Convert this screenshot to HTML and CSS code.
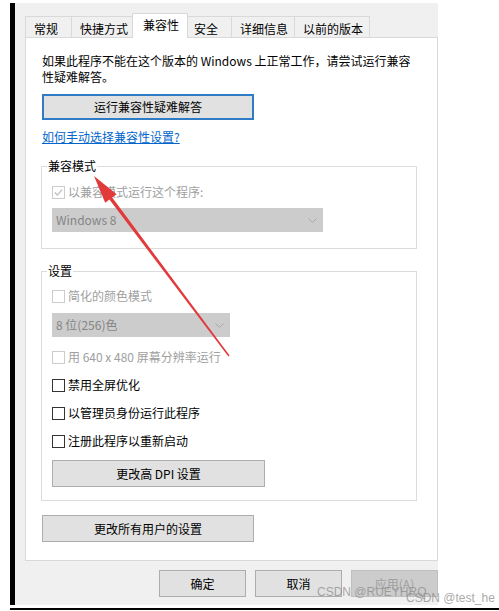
FILE: index.html
```html
<!DOCTYPE html>
<html lang="zh-CN">
<head>
<meta charset="utf-8">
<title>兼容性</title>
<link rel="stylesheet" href="styles.css">
</head>
<body>
<div class="screen">
  <div class="window">
    <div class="tabs">
      <div class="tab">常规</div>
      <div class="tab">快捷方式</div>
      <div class="tab active">兼容性</div>
      <div class="tab">安全</div>
      <div class="tab">详细信息</div>
      <div class="tab">以前的版本</div>
    </div>
    <div class="panel">
      <p class="intro">如果此程序不能在这个版本的 Windows 上正常工作，请尝试运行兼容性疑难解答。</p>
      <button class="btn btn-default btn-wide">运行兼容性疑难解答</button>
      <a class="link">如何手动选择兼容性设置?</a>

      <div class="group g1">
        <div class="legend">兼容模式</div>
        <div class="check disabled first">
          <span class="box"><svg width="11" height="11" viewBox="0 0 11 11"><path d="M1.8 5.6 L4.3 8 L9.2 2.6" fill="none" stroke="#c2c2c2" stroke-width="1.4"/></svg></span>以兼容模式运行这个程序:
        </div>
        <div class="select s1">Windows 8<svg width="9" height="5" viewBox="0 0 9 5"><path d="M0.5 0.5 L4.5 4.5 L8.5 0.5" fill="none" stroke="#aaaaaa"/></svg></div>
      </div>

      <div class="group g2">
        <div class="legend">设置</div>
        <div class="check disabled first"><span class="box"></span>简化的颜色模式</div>
        <div class="select s2">8 位(256)色<svg width="9" height="5" viewBox="0 0 9 5"><path d="M0.5 0.5 L4.5 4.5 L8.5 0.5" fill="none" stroke="#aaaaaa"/></svg></div>
        <div class="check disabled spaced"><span class="box"></span>用 640 x 480 屏幕分辨率运行</div>
        <div class="check spaced"><span class="box"></span>禁用全屏优化</div>
        <div class="check spaced"><span class="box"></span>以管理员身份运行此程序</div>
        <div class="check spaced"><span class="box"></span>注册此程序以重新启动</div>
        <button class="btn btn-dpi">更改高 DPI 设置</button>
      </div>

      <button class="btn btn-wide btn-all">更改所有用户的设置</button>
    </div>
    <div class="footer">
      <button class="btn btn-foot">确定</button>
      <button class="btn btn-foot">取消</button>
      <button class="btn btn-foot btn-disabled">应用(A)</button>
    </div>
  </div>
  <div class="baseline"></div>

  <svg class="arrow" width="499" height="611" viewBox="0 0 499 611">
    <polygon points="94,176 116.6,194.2 112.2,197.4 229.6,355.6 228.4,356.4 109.4,199.6 105.2,202.8" fill="#e2393b"/>
  </svg>
  <div class="watermark w1">CSDN @RUEYHRQ</div>
  <div class="watermark w2">CSDN @test_he</div>
</div>
</body>
</html>
```

FILE: styles.css
```css
html, body {
  margin: 0;
  padding: 0;
  background: #ffffff;
}

body {
  font-family: "Noto Sans CJK SC", "Microsoft YaHei", sans-serif;
  font-size: 12px;
  color: #000000;
}

.screen {
  position: relative;
  width: 499px;
  height: 611px;
  padding-top: 3px;
  box-sizing: border-box;
  overflow: hidden;
}

.window {
  margin-left: 10px;
  width: 428px;
  height: 602px;
  box-sizing: border-box;
  border-left: 5px solid #000000;
  background: #f0f0f0;
  padding: 10px 0 0 10px;
  display: flex;
  flex-direction: column;
}

/* Tabs */
.tabs {
  display: flex;
  align-items: flex-end;
  height: 24px;
  flex: none;
}

.tab {
  box-sizing: border-box;
  height: 21px;
  min-width: 47px;
  padding: 4px 6px 0 8px;
  line-height: 16px;
  border: 1px solid #d9d9d9;
  border-bottom: none;
  background: #f0f0f0;
  margin-left: -1px;
  white-space: nowrap;
}

.tab:first-child {
  margin-left: 0;
}

.tab.active {
  height: 25px;
  margin: 0 -2px -1px -3px;
  padding: 3px 8px 0 10px;
  background: #ffffff;
  position: relative;
  z-index: 1;
}

/* Panel */
.panel {
  box-sizing: border-box;
  height: 524px;
  flex: none;
  background: #ffffff;
  border: 1px solid #d9d9d9;
  padding: 15px 0 0 16px;
  display: flex;
  flex-direction: column;
  align-items: flex-start;
}

.intro {
  margin: 0;
  width: 372px;
  line-height: 16px;
}

.btn {
  font: inherit;
  color: #000000;
  box-sizing: border-box;
  height: 27px;
  background: #e1e1e1;
  border: 1px solid #adadad;
  padding: 0;
  margin: 0;
  display: flex;
  align-items: center;
  justify-content: center;
  line-height: 16px;
}

.btn-wide {
  width: 212px;
  margin-top: 9px;
}

.btn-default {
  height: 26px;
  border: 2px solid #2f7cc6;
}

.link {
  margin-top: 9px;
  line-height: 16px;
  color: #0066cc;
  text-decoration: underline;
}

/* Groups */
.group {
  margin-left: -1px;
  width: 376px;
  box-sizing: border-box;
  border: 1px solid #dcdcdc;
  padding: 0 0 0 10px;
  display: flex;
  flex-direction: column;
  align-items: flex-start;
}

.g1 {
  margin-top: 21px;
  padding-bottom: 16px;
}

.g2 {
  margin-top: 22px;
  padding-bottom: 13px;
}

.legend {
  margin: -9px 0 0 -5px;
  padding: 0 1px;
  background: #ffffff;
  line-height: 16px;
}

.check {
  display: flex;
  align-items: center;
  height: 16px;
  line-height: 16px;
  white-space: nowrap;
}

.g1 .check.first {
  margin-top: 10px;
}

.g2 .check.first {
  margin-top: 9px;
}

.check.spaced {
  margin-top: 12px;
}

.box {
  width: 13px;
  height: 13px;
  box-sizing: border-box;
  border: 1px solid #333333;
  background: #ffffff;
  margin-right: 3px;
  display: flex;
  align-items: center;
  justify-content: center;
}

.check.disabled {
  color: #a0a0a0;
}

.check.disabled .box {
  border-color: #cccccc;
}

.select {
  box-sizing: border-box;
  height: 24px;
  background: #cccccc;
  color: #858585;
  display: flex;
  align-items: center;
  justify-content: space-between;
  padding: 0 6px 0 4px;
  line-height: 16px;
}

.s1 {
  width: 271px;
  margin-top: 8px;
}

.s2 {
  width: 178px;
  margin-top: 9px;
}

.btn-dpi {
  width: 213px;
  margin-top: 11px;
}

.btn-all {
  margin-top: 14px;
}

/* Footer */
.footer {
  display: flex;
  justify-content: flex-end;
  gap: 9px;
  padding-top: 9px;
}

.btn-foot {
  width: 87px;
}

.btn-disabled {
  background: #cccccc;
  border-color: #bfbfbf;
  color: #a0a0a0;
}

.baseline {
  margin: 3px 0 0 10px;
  height: 2px;
  background: #000000;
}

/* Overlays */
.arrow {
  position: absolute;
  left: 0;
  top: 0;
  pointer-events: none;
}

.watermark {
  position: absolute;
  font-family: "Liberation Sans", Arial, sans-serif;
  font-size: 12px;
  line-height: 14px;
  color: rgba(140, 140, 140, 0.75);
  white-space: nowrap;
}

.w1 {
  left: 317px;
  top: 585px;
}

.w2 {
  left: 406px;
  top: 591px;
}
```
